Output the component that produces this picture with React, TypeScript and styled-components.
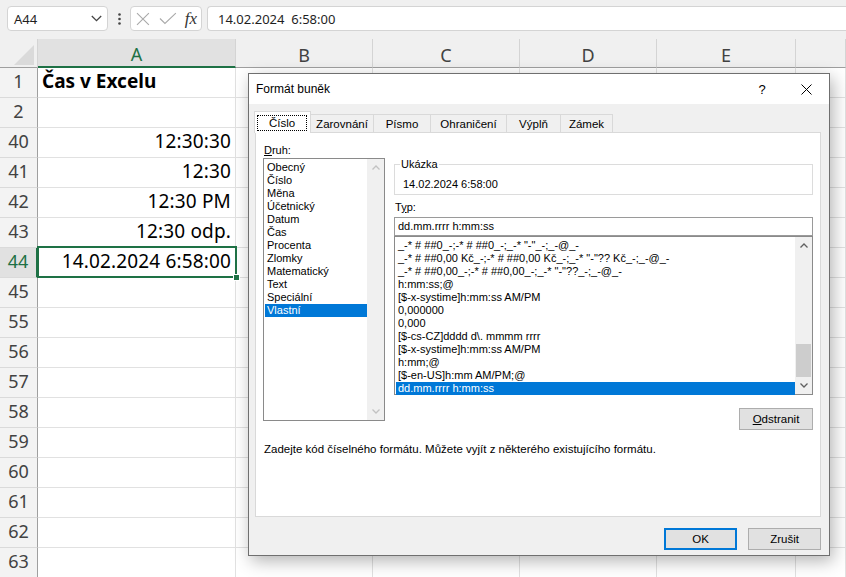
import styled, { createGlobalStyle } from "styled-components";

const GREEN = "#1e7145";
const BLUE = "#0078d7";

const GlobalStyle = createGlobalStyle`
  html, body {
    margin: 0;
    padding: 0;
    background: #fff;
  }
  body {
    font-family: "Noto Sans", "Liberation Sans", sans-serif;
    overflow: hidden;
  }
`;

const Page = styled.div`
  position: relative;
  width: 846px;
  height: 577px;
  overflow: hidden;
  background: #fff;
`;

/* ---------- formula bar ---------- */

const FormulaBar = styled.div`
  height: 39px;
  box-sizing: border-box;
  background: #f0f0f0;
  display: flex;
  align-items: flex-start;
  padding: 6px 0 0 7px;
`;

const NameBox = styled.div`
  width: 101px;
  height: 25px;
  box-sizing: border-box;
  background: #fff;
  border: 1px solid #d4d4d4;
  border-radius: 4px;
  display: flex;
  align-items: center;
  justify-content: space-between;
  padding: 0 5px 0 6px;
  font-size: 13px;
  color: #1f1f1f;
`;

const Dots = styled.div`
  width: 22px;
  height: 25px;
  display: flex;
  align-items: center;
  justify-content: center;
`;

const FxBox = styled.div`
  width: 72px;
  height: 25px;
  box-sizing: border-box;
  background: #fff;
  border: 1px solid #d4d4d4;
  border-radius: 4px;
  display: flex;
  align-items: center;
  padding: 0 4px 0 5px;
  gap: 9px;
`;

const Fx = styled.span`
  font-family: "Liberation Serif", serif;
  font-style: italic;
  font-size: 17px;
  color: #333;
  margin-left: -1px;
`;

const FormulaInput = styled.div`
  flex: 1;
  height: 25px;
  box-sizing: border-box;
  margin-left: 5px;
  background: #fff;
  border: 1px solid #d4d4d4;
  border-right: none;
  border-radius: 4px 0 0 4px;
  display: flex;
  align-items: center;
  padding-left: 10px;
  font-size: 13px;
  color: #1f1f1f;
  white-space: pre;
`;

/* ---------- sheet ---------- */

const Sheet = styled.div`
  display: grid;
  grid-template-columns: 38px 198px 137px 147px 137px 139px 1fr;
  grid-template-rows: 29px;
  grid-auto-rows: 30px;
`;

const Corner = styled.div`
  box-sizing: border-box;
  background: #f0f0f0;
  border-right: 1px solid #d4d4d4;
  border-bottom: 1px solid #9f9f9f;
  display: flex;
  align-items: flex-end;
  justify-content: flex-end;
  padding: 0 3px 2px 0;
`;

const ColHead = styled.div<{ $active?: boolean }>`
  box-sizing: border-box;
  background: ${(p) => (p.$active ? "#e1e1e1" : "#f0f0f0")};
  border-right: 1px solid #d4d4d4;
  border-bottom: ${(p) => (p.$active ? `2px solid ${GREEN}` : "1px solid #9f9f9f")};
  color: ${(p) => (p.$active ? GREEN : "#424242")};
  display: flex;
  align-items: center;
  justify-content: center;
  padding-top: 3px;
  font-size: 18px;
`;

const RowHead = styled.div<{ $active?: boolean }>`
  box-sizing: border-box;
  background: ${(p) => (p.$active ? "#e1e1e1" : "#f3f3f3")};
  border-right: ${(p) => (p.$active ? `2px solid ${GREEN}` : "1px solid #9f9f9f")};
  border-bottom: 1px solid #dadada;
  color: ${(p) => (p.$active ? GREEN : "#424242")};
  display: flex;
  align-items: flex-end;
  justify-content: center;
  padding-bottom: 4px;
  font-size: 18px;
  line-height: 24px;
`;

const Cell = styled.div<{ $bold?: boolean; $left?: boolean; $selected?: boolean }>`
  position: relative;
  box-sizing: border-box;
  border-right: 1px solid #e1e1e1;
  border-bottom: 1px solid #e1e1e1;
  display: flex;
  align-items: flex-end;
  justify-content: ${(p) => (p.$left ? "flex-start" : "flex-end")};
  padding: 0 4px 4px 4px;
  font-size: 19px;
  line-height: 24px;
  font-weight: ${(p) => (p.$bold ? 700 : 400)};
  letter-spacing: ${(p) => (p.$bold ? "0" : "0.15px")};
  color: #000;
  white-space: nowrap;
  z-index: ${(p) => (p.$selected ? 2 : 0)};

  ${(p) =>
    p.$selected &&
    `
    &::after {
      content: "";
      position: absolute;
      left: -1px;
      top: -2px;
      right: -2px;
      bottom: -1px;
      border: 2px solid ${GREEN};
    }
    &::before {
      content: "";
      position: absolute;
      right: -5px;
      bottom: -4px;
      width: 5px;
      height: 5px;
      background: ${GREEN};
      border: 1px solid #fff;
      z-index: 1;
    }
  `}
`;

/* ---------- dialog ---------- */

const Dialog = styled.div`
  position: absolute;
  left: 248px;
  top: 73px;
  width: 582px;
  height: 483px;
  box-sizing: border-box;
  border: 1px solid #6f6f6f;
  background: #f0f0f0;
  box-shadow: 3px 5px 16px rgba(0, 0, 0, 0.3);
  display: flex;
  flex-direction: column;
  font-family: "Liberation Sans", Arial, sans-serif;
  font-size: 11px;
  color: #000;
`;

const TitleBar = styled.div`
  height: 30px;
  flex: none;
  background: #fff;
  display: flex;
  align-items: center;
  padding-left: 7px;
  font-size: 12px;
`;

const TitleButton = styled.div<{ $w: number }>`
  width: ${(p) => p.$w}px;
  height: 30px;
  display: flex;
  align-items: center;
  justify-content: center;
  font-size: 13px;
`;

const Body = styled.div`
  flex: 1;
  padding: 7px 8px 0 6px;
  display: flex;
  flex-direction: column;
`;

const TabRow = styled.div`
  height: 21px;
  display: flex;
  align-items: flex-end;
`;

const Tab = styled.div<{ $w: number; $active?: boolean }>`
  position: relative;
  box-sizing: border-box;
  width: ${(p) => p.$w}px;
  height: ${(p) => (p.$active ? 22 : 18)}px;
  margin-left: -1px;
  margin-bottom: ${(p) => (p.$active ? -1 : 0)}px;
  z-index: ${(p) => (p.$active ? 1 : 0)};
  background: ${(p) => (p.$active ? "#fff" : "#f0f0f0")};
  border: 1px solid #d9d9d9;
  border-bottom: none;
  display: flex;
  align-items: ${(p) => (p.$active ? "flex-start" : "center")};
  justify-content: center;
  padding-top: ${(p) => (p.$active ? 4 : 0)}px;
  font-size: 11.5px;
`;

const FocusLabel = styled.span`
  box-sizing: border-box;
  flex: 1;
  margin: 0 4px 0 3px;
  height: 14px;
  outline: 1px dotted #000;
  display: flex;
  align-items: center;
  justify-content: center;
`;

const Panel = styled.div`
  height: 385px;
  box-sizing: border-box;
  background: #fff;
  border: 1px solid #d9d9d9;
  padding: 10px 7px 0 7px;
`;

const Columns = styled.div`
  display: grid;
  grid-template-columns: 122px 1fr;
  column-gap: 9px;
`;

const Column = styled.div<{ $top?: number }>`
  display: flex;
  flex-direction: column;
  padding-top: ${(p) => p.$top ?? 0}px;
`;

const Label = styled.div`
  height: 15px;
  line-height: 15px;
  padding-left: 1px;
`;

const ListBox = styled.div<{ $h: number }>`
  height: ${(p) => p.$h}px;
  box-sizing: border-box;
  border: 1px solid #8a8a8a;
  background: #fff;
  display: flex;
`;

const ListItems = styled.div`
  flex: 1;
  min-width: 0;
  padding: 2px 0 0 1px;
`;

const Item = styled.div<{ $selected?: boolean; $pad: number }>`
  height: 13px;
  line-height: 13px;
  padding-left: ${(p) => p.$pad}px;
  white-space: nowrap;
  overflow: hidden;
  background: ${(p) => (p.$selected ? BLUE : "transparent")};
  color: ${(p) => (p.$selected ? "#fff" : "#000")};
`;

const ScrollBar = styled.div`
  position: relative;
  width: 17px;
  flex: none;
  background: #f0f0f0;
  display: flex;
  flex-direction: column;
  justify-content: space-between;
`;

const ScrollArrow = styled.div<{ $disabled?: boolean }>`
  height: 17px;
  display: flex;
  align-items: center;
  justify-content: center;
  color: ${(p) => (p.$disabled ? "#c2c2c2" : "#606060")};
`;

const Thumb = styled.div`
  position: absolute;
  left: 1px;
  right: 1px;
  top: 107px;
  height: 33px;
  background: #cdcdcd;
`;

const Group = styled.fieldset`
  margin: 0;
  padding: 0 8px 3px 5px;
  border: 1px solid #dcdcdc;
  min-width: 0;

  legend {
    padding: 0 1px;
    line-height: 13px;
  }
`;

const Sample = styled.div`
  height: 13px;
  line-height: 13px;
  margin-top: 7px;
  padding-left: 3px;
`;

const TypeInput = styled.div`
  height: 19px;
  box-sizing: border-box;
  margin-top: 2px;
  border: 1px solid #9a9a9a;
  background: #fff;
  padding-left: 3px;
  line-height: 17px;
`;

const Button = styled.div<{ $w: number; $default?: boolean }>`
  width: ${(p) => p.$w}px;
  height: 22px;
  box-sizing: border-box;
  background: #e1e1e1;
  border: ${(p) => (p.$default ? `2px solid ${BLUE}` : "1px solid #adadad")};
  display: flex;
  align-items: center;
  justify-content: center;
  font-size: 11.5px;
`;

const RightButton = styled.div`
  display: flex;
  justify-content: flex-end;
  margin-top: 13px;
`;

const Hint = styled.div`
  margin-top: 13px;
  padding-left: 1px;
  line-height: 13px;
  font-size: 11.5px;
`;

const Footer = styled.div`
  display: flex;
  justify-content: flex-end;
  gap: 11px;
  margin-top: 11px;
`;

/* ---------- drawings ---------- */

const Chevron = ({ up }: { up?: boolean }) => (
  <svg width="8" height="5" viewBox="0 0 8 5">
    <polyline
      points={up ? "0.5,4.5 4,1 7.5,4.5" : "0.5,0.5 4,4 7.5,0.5"}
      fill="none"
      stroke="currentColor"
      strokeWidth="1.3"
    />
  </svg>
);

const ScrollTrack = ({ disabled, thumb }: { disabled?: boolean; thumb?: boolean }) => (
  <ScrollBar>
    <ScrollArrow $disabled={disabled}>
      <Chevron up />
    </ScrollArrow>
    {thumb && <Thumb />}
    <ScrollArrow $disabled={disabled}>
      <Chevron />
    </ScrollArrow>
  </ScrollBar>
);

/* ---------- data ---------- */

const rows: { n: number; text?: string; bold?: boolean; selected?: boolean }[] = [
  { n: 1, text: "Čas v Excelu", bold: true },
  { n: 2 },
  { n: 40, text: "12:30:30" },
  { n: 41, text: "12:30" },
  { n: 42, text: "12:30 PM" },
  { n: 43, text: "12:30 odp." },
  { n: 44, text: "14.02.2024 6:58:00", selected: true },
  { n: 45 },
  ...[55, 56, 57, 58, 59, 60, 61, 62, 63].map((n) => ({ n })),
];

const columns = ["A", "B", "C", "D", "E", ""];

const tabs = [
  { label: "Číslo", w: 57 },
  { label: "Zarovnání", w: 64 },
  { label: "Písmo", w: 58 },
  { label: "Ohraničení", w: 77 },
  { label: "Výplň", w: 55 },
  { label: "Zámek", w: 53 },
];

const categories = [
  "Obecný",
  "Číslo",
  "Měna",
  "Účetnický",
  "Datum",
  "Čas",
  "Procenta",
  "Zlomky",
  "Matematický",
  "Text",
  "Speciální",
  "Vlastní",
];

const formats = [
  '_-* # ##0_-;-* # ##0_-;_-* "-"_-;_-@_-',
  '_-* # ##0,00 Kč_-;-* # ##0,00 Kč_-;_-* "-"?? Kč_-;_-@_-',
  '_-* # ##0,00_-;-* # ##0,00_-;_-* "-"??_-;_-@_-',
  "h:mm:ss;@",
  "[$-x-systime]h:mm:ss AM/PM",
  "0,000000",
  "0,000",
  "[$-cs-CZ]dddd d\\. mmmm rrrr",
  "[$-x-systime]h:mm:ss AM/PM",
  "h:mm;@",
  "[$-en-US]h:mm AM/PM;@",
  "dd.mm.rrrr h:mm:ss",
];

export default function App() {
  return (
    <Page>
      <GlobalStyle />

      <FormulaBar>
        <NameBox>
          A44
          <svg width="11" height="7" viewBox="0 0 11 7">
            <polyline points="0.8,1 5.5,5.7 10.2,1" fill="none" stroke="#444" strokeWidth="1.3" />
          </svg>
        </NameBox>
        <Dots>
          <svg width="3" height="12" viewBox="0 0 3 12">
            <circle cx="1.5" cy="1.5" r="1.3" fill="#444" />
            <circle cx="1.5" cy="6" r="1.3" fill="#444" />
            <circle cx="1.5" cy="10.5" r="1.3" fill="#444" />
          </svg>
        </Dots>
        <FxBox>
          <svg width="14" height="14" viewBox="0 0 14 14">
            <path d="M1 1 13 13M13 1 1 13" stroke="#a9a9a9" strokeWidth="1.1" fill="none" />
          </svg>
          <svg width="18" height="13" viewBox="0 0 18 13">
            <polyline points="1,6.5 6,11.5 17,1" fill="none" stroke="#a9a9a9" strokeWidth="1.1" />
          </svg>
          <Fx>fx</Fx>
        </FxBox>
        <FormulaInput>14.02.2024  6:58:00</FormulaInput>
      </FormulaBar>

      <Sheet>
        <Corner>
          <svg width="20" height="20" viewBox="0 0 20 20">
            <polygon points="20,0 20,20 0,20" fill="#dadada" />
          </svg>
        </Corner>
        {columns.map((c) => (
          <ColHead key={c || "F"} $active={c === "A"}>
            {c}
          </ColHead>
        ))}
        {rows.map((r) => [
          <RowHead key={`h${r.n}`} $active={r.selected}>
            {r.n}
          </RowHead>,
          <Cell key={`a${r.n}`} $bold={r.bold} $left={r.bold} $selected={r.selected}>
            {r.text}
          </Cell>,
          ...[1, 2, 3, 4, 5].map((i) => <Cell key={`c${r.n}-${i}`} />),
        ])}
      </Sheet>

      <Dialog>
        <TitleBar>
          Formát buněk
          <TitleButton $w={42} style={{ marginLeft: "auto" }}>
            ?
          </TitleButton>
          <TitleButton $w={46}>
            <svg width="11" height="11" viewBox="0 0 11 11">
              <path d="M0.5 0.5 10.5 10.5M10.5 0.5 0.5 10.5" stroke="#000" strokeWidth="1" fill="none" />
            </svg>
          </TitleButton>
        </TitleBar>

        <Body>
          <TabRow>
            {tabs.map((t, i) => (
              <Tab key={t.label} $w={t.w} $active={i === 0}>
                {i === 0 ? <FocusLabel>{t.label}</FocusLabel> : t.label}
              </Tab>
            ))}
          </TabRow>

          <Panel>
            <Columns>
              <Column>
                <Label>
                  <u>D</u>ruh:
                </Label>
                <ListBox $h={263}>
                  <ListItems>
                    {categories.map((c) => (
                      <Item key={c} $pad={2} $selected={c === "Vlastní"}>
                        {c}
                      </Item>
                    ))}
                  </ListItems>
                  <ScrollTrack disabled />
                </ListBox>
              </Column>

              <Column $top={15}>
                <Group>
                  <legend>Ukázka</legend>
                  <Sample>14.02.2024 6:58:00</Sample>
                </Group>
                <Label style={{ marginTop: 5 }}>
                  T<u>y</u>p:
                </Label>
                <TypeInput>dd.mm.rrrr h:mm:ss</TypeInput>
                <ListBox $h={159}>
                  <ListItems>
                    {formats.map((f, i) => (
                      <Item key={i} $pad={2} $selected={i === formats.length - 1}>
                        {f}
                      </Item>
                    ))}
                  </ListItems>
                  <ScrollTrack thumb />
                </ListBox>
                <RightButton>
                  <Button $w={74}>
                    <span>
                      <u>O</u>dstranit
                    </span>
                  </Button>
                </RightButton>
              </Column>
            </Columns>
            <Hint>Zadejte kód číselného formátu. Můžete vyjít z některého existujícího formátu.</Hint>
          </Panel>

          <Footer>
            <Button $w={73} $default>
              OK
            </Button>
            <Button $w={73}>Zrušit</Button>
          </Footer>
        </Body>
      </Dialog>
    </Page>
  );
}
